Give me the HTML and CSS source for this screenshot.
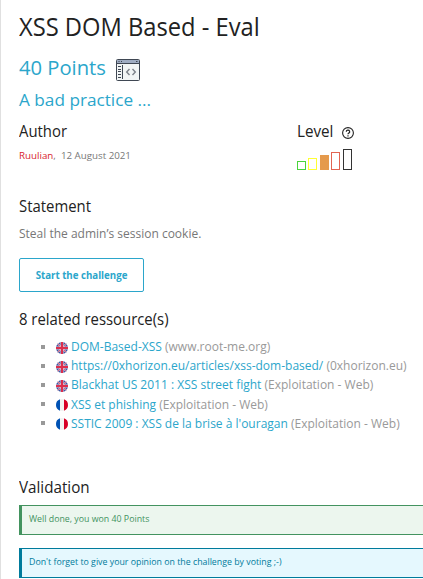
FILE: index.html
```html
<!DOCTYPE html>
<html lang="en">
<head>
<meta charset="utf-8">
<title>XSS DOM Based - Eval</title>
<link rel="stylesheet" href="styles.css">
</head>
<body>
<svg class="defs" aria-hidden="true">
  <symbol id="uk" viewBox="0 0 12 12">
    <circle cx="6" cy="6" r="6" fill="#3d57a4"/>
    <path d="M1.8 1.8l8.4 8.4M10.2 1.8L1.8 10.2" stroke="#e9dfe8" stroke-width="1.5"/>
    <path d="M1.8 1.8l8.4 8.4M10.2 1.8L1.8 10.2" stroke="#dc3b57" stroke-width=".8"/>
    <path d="M6 0v12M0 6h12" stroke="#e8c8d4" stroke-width="3"/>
    <path d="M6 0v12M0 6h12" stroke="#dc2f4d" stroke-width="2"/>
  </symbol>
  <symbol id="fr" viewBox="0 0 12 12">
    <path d="M4 .35A6 6 0 0 0 4 11.65z" fill="#0052b4"/>
    <path d="M4 .35a6 6 0 0 1 4 0v11.3a6 6 0 0 1-4 0z" fill="#f3f3f3"/>
    <path d="M8 .35a6 6 0 0 1 0 11.3z" fill="#d80027"/>
  </symbol>
</svg>
<main class="page">
  <h1 class="title"><span class="fit">XSS DOM Based - Eval</span></h1>
  <div class="points">
    <span class="points-text">40 Points</span>
    <svg class="code-icon" width="24" height="22" viewBox="0 0 24 22">
      <rect x=".5" y=".5" width="23" height="21" rx="1" fill="#f2f5f5" stroke="#3f4753"/>
      <path d="M1 1h22v3H1z" fill="#9facc2"/>
      <path d="M1 4.5h22" stroke="#3f4753"/>
      <path d="M2.5 2.5h1M5 2.5h1M20 2.5h1.5" stroke="#3f4753"/>
      <path d="M2 7.5h3M2 10.5h3M2 12.5h3M2 15.5h3M2 18.5h3M6.5 6v14" stroke="#3f4753"/>
      <path d="M13.5 10l-2.8 3 2.8 3M16.5 10l2.8 3-2.8 3" fill="none" stroke="#7d828a" stroke-width="1.4"/>
    </svg>
  </div>
  <p class="tagline">A bad practice ...</p>
  <div class="meta">
    <section>
      <h2><span class="fit author">Author</span></h2>
      <p class="byline"><a>Ruulian</a>, &nbsp;12 August 2021</p>
    </section>
    <section>
      <h2 class="level-head"><span class="fit level">Level</span>
        <svg width="12" height="12" viewBox="0 0 12 12"><circle cx="6" cy="6" r="5.4" fill="none" stroke="#222" stroke-width="1.1"/><path d="M4.3 4.8a1.7 1.6 0 1 1 2.5 1.3Q6 6.6 6 7.3M6 8.2v1.2" fill="none" stroke="#222" stroke-width="1.2"/></svg>
      </h2>
      <div class="bars"><i class="b1"></i><i class="b2"></i><i class="b3"></i><i class="b4"></i><i class="b5"></i></div>
    </section>
  </div>
  <h2 class="statement-head"><span class="fit statement">Statement</span></h2>
  <p class="text">Steal the admin’s session cookie.</p>
  <a class="button">Start the challenge</a>
  <h2><span class="fit related">8 related ressource(s)</span></h2>
  <ul class="resources">
    <li><svg><use href="#uk"/></svg><span><a>DOM-Based-XSS</a> (www.root-me.org)</span></li>
    <li><svg><use href="#uk"/></svg><span><a>https://0xhorizon.eu/articles/xss-dom-based/</a> (0xhorizon.eu)</span></li>
    <li><svg><use href="#uk"/></svg><span><a>Blackhat US 2011 : XSS street fight</a> (Exploitation - Web)</span></li>
    <li><svg><use href="#fr"/></svg><span><a>XSS et phishing</a> (Exploitation - Web)</span></li>
    <li><svg><use href="#fr"/></svg><span><a>SSTIC 2009 : XSS de la brise à l'ouragan</a> (Exploitation - Web)</span></li>
  </ul>
  <h2><span class="fit validation">Validation</span></h2>
  <p class="alert success">Well done, you won 40 Points</p>
  <p class="alert info">Don't forget to give your opinion on the challenge by voting ;-)</p>
</main>
</body>
</html>
```
FILE: styles.css
```css
* { box-sizing: border-box; margin: 0; padding: 0; }
body { height: 579px; overflow: hidden; background: #fff; color: #777; font-family: "Open Sans", "Noto Sans", sans-serif; white-space: nowrap; }
.defs { display: none; }
.page { height: 579px; border-left: 1px solid #e0e0e0; padding: 9px 0 0 18px; overflow: hidden; }
h1, h2 { color: #222; font-weight: 400; }
.title { font-size: 25px; line-height: 34px; height: 34px; }
.fit { display: inline-block; transform-origin: 0 50%; transform: scaleX(.93); }
.title .fit { transform: scaleX(.948); }
.fit.level, .fit.validation { transform: scaleX(.95); }
h2 { font-size: 16px; line-height: 24px; height: 24px; }
.points { display: flex; align-items: center; gap: 10px; height: 40px; margin-top: 5px; }
.points-text { font-size: 20.2px; line-height: 38px; height: 40px; color: #2ba6cb; }
.code-icon { margin-top: 4px; }
.tagline { font-size: 17.2px; line-height: 23px; color: #2ba6cb; }
.meta { display: grid; grid-template-columns: 278px 1fr; height: 75px; margin-top: 8px; }
.byline { font-size: 9.75px; line-height: 20px; margin-top: 3px; }
.byline a { color: #d8232f; }
.level-head { display: flex; align-items: center; }
.level-head svg { margin: 3px 0 0 7px; }
.bars { display: flex; align-items: flex-end; height: 21px; margin-top: 6px; }
.bars i { width: 9px; border: 1px solid; }
.b1 { height: 9px; color: #4bd43c; margin-right: 2px; }
.b2 { height: 12px; color: #ff3; margin-right: 3px; }
.b3 { height: 15px; color: #e59a4c; background: #e59a4c; margin-right: 2px; }
.b4 { height: 18px; color: #e26451; margin-right: 3px; }
.b5 { height: 21px; color: #333; }
.text { font-size: 12px; line-height: 20px; margin-top: 6px; }
.button { display: flex; align-items: center; justify-content: center; width: 125px; height: 34px; margin: 14px 0 15px; border: 1px solid #2ba6cb; border-radius: 2px; color: #2ba6cb; font-size: 9.7px; font-weight: 700; }
.resources { list-style: none; height: 132px; margin: 6px 0 6px 22px; }
.resources li { display: flex; align-items: center; height: 19.2px; font-size: 12px; line-height: 19.2px; color: #999; }
.resources li::before { content: ""; flex: none; width: 4px; height: 4px; margin-right: 11px; background: #999; }
.resources svg { flex: none; width: 12px; height: 12px; margin: 2px 3px 0 0; }
.resources a { color: #2ba6cb; }
.alert { height: 30px; border: solid; border-width: 1px 0 1px 3px; padding-left: 7px; font-size: 8.8px; line-height: 26px; }
.success { margin: 6px 0 13px; border-color: #43935f; color: #43935f; background: #ecf6ee; }
.info { border-color: #007b9c; color: #007b9c; background: #e5f8fe; }
```
